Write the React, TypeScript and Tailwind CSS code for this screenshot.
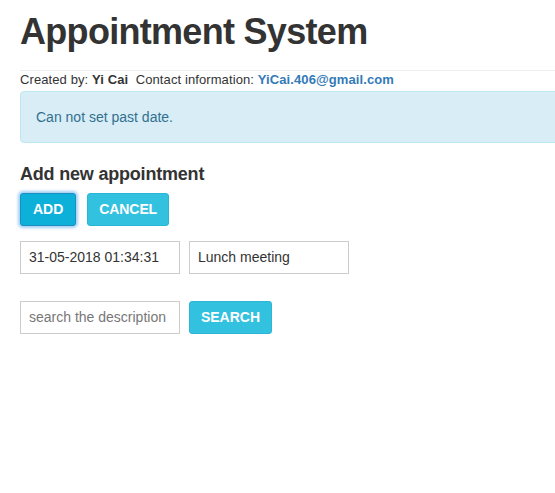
import React from "react";

export default function App() {
  return (
    <div
      className="w-[555px] h-[493px] overflow-hidden bg-white text-[#333] pl-[20px]"
      style={{ fontFamily: '"Liberation Sans", Arial, sans-serif' }}
    >
      <div className="w-[600px]">
        <h1 className="pt-[12px] text-[36px] leading-[40px] font-bold tracking-[-0.7px] text-[#333]">
          Appointment System
        </h1>
        <div className="mt-[18px] h-px bg-[#eee]" />
        <div className="h-[18px] text-[13px] leading-[18px] tracking-[0.1px] text-[#333] whitespace-pre">
          Created by: <b>Yi Cai</b>  Contact information:{" "}
          <b className="text-[#337ab7]">YiCai.406@gmail.com</b>
        </div>
        <div className="mt-[2px] h-[52px] border border-[#bce8f1] bg-[#d9edf7] rounded-[4px] px-[15px] py-[15px] text-[14px] leading-[20px] text-[#31708f]">
          Can not set past date.
        </div>
      </div>
      <h4 className="mt-[21px] text-[18px] leading-[20px] font-bold tracking-[-0.2px] text-[#333]">
        Add new appointment
      </h4>
      <div className="mt-[9px] flex gap-[11px]">
        <button className="h-[33px] px-[12px] rounded-[3px] border border-[#1b8fc3] bg-[#0cb0d9] text-white text-[14px] font-bold shadow-[0_0_3px_2px_rgba(102,175,233,0.6)]">
          ADD
        </button>
        <button className="h-[33px] px-[11px] rounded-[3px] border border-[#2cb6d6] bg-[#33c1e0] text-white text-[14px] font-bold tracking-[-0.1px]">
          CANCEL
        </button>
      </div>
      <div className="mt-[15px] flex gap-[9px]">
        <div className="w-[160px] h-[33px] border border-[#ccc] px-[8px] flex items-center text-[14px] text-[#333]">
          31-05-2018 01:34:31
        </div>
        <div className="w-[160px] h-[33px] border border-[#ccc] px-[8px] flex items-center text-[14px] text-[#333]">
          Lunch meeting
        </div>
      </div>
      <div className="mt-[27px] flex gap-[9px]">
        <div className="w-[160px] h-[33px] border border-[#ccc] px-[8px] flex items-center text-[14px] text-[#777]">
          search the description
        </div>
        <button className="w-[83px] h-[33px] rounded-[3px] border border-[#2cb6d6] bg-[#33c1e0] text-white text-[14px] font-bold">
          SEARCH
        </button>
      </div>
    </div>
  );
}
